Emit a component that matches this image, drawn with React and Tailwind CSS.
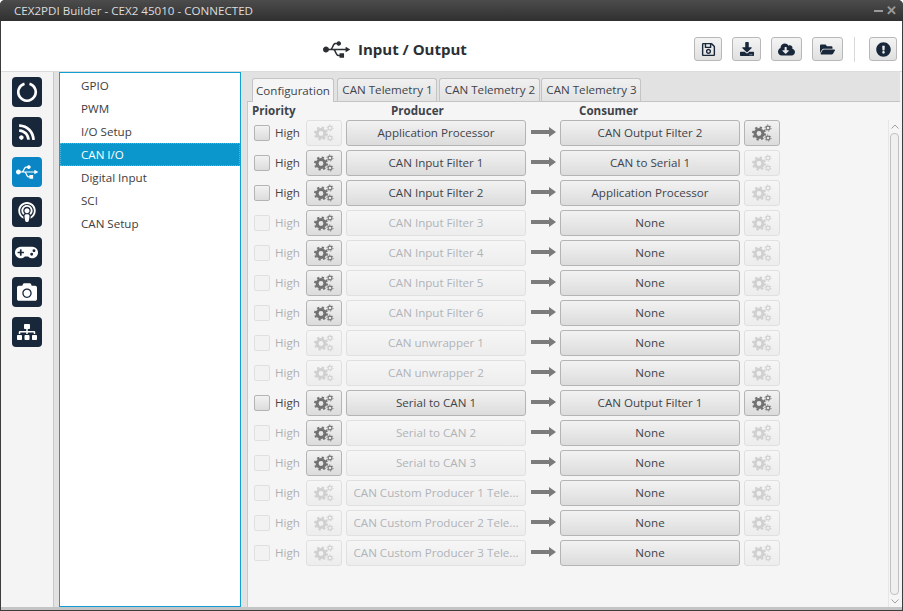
import React from "react";
import { FaUsb, FaRss, FaPodcast, FaGamepad, FaCamera, FaSitemap, FaRegSave, FaDownload, FaCloudDownloadAlt, FaFolderOpen, FaExclamationCircle } from "react-icons/fa";

const rows = [
  ["Application Processor", 1, 0, 1, "CAN Output Filter 2", 1],
  ["CAN Input Filter 1", 1, 1, 1, "CAN to Serial 1", 0],
  ["CAN Input Filter 2", 1, 1, 1, "Application Processor", 0],
  ["CAN Input Filter 3", 0, 1, 0, "None", 0],
  ["CAN Input Filter 4", 0, 1, 0, "None", 0],
  ["CAN Input Filter 5", 0, 1, 0, "None", 0],
  ["CAN Input Filter 6", 0, 1, 0, "None", 0],
  ["CAN unwrapper 1", 0, 0, 0, "None", 0],
  ["CAN unwrapper 2", 0, 0, 0, "None", 0],
  ["Serial to CAN 1", 1, 1, 1, "CAN Output Filter 1", 1],
  ["Serial to CAN 2", 0, 1, 0, "None", 0],
  ["Serial to CAN 3", 0, 1, 0, "None", 0],
  ["CAN Custom Producer 1 Tele...", 0, 0, 0, "None", 0],
  ["CAN Custom Producer 2 Tele...", 0, 0, 0, "None", 0],
  ["CAN Custom Producer 3 Tele...", 0, 0, 0, "None", 0],
];

const Power = () => (
  <svg width="20" height="20" viewBox="0 0 20 20" fill="none">
    <path d="M7.5 1.67 A8.7 8.7 0 1 0 12.5 1.67" stroke="white" strokeWidth="2.6" />
  </svg>
);

const Arrow = () => (
  <svg width="25" height="12" viewBox="0 0 25 12">
    <path d="M0 4H18V1L25 6L18 11V8H0Z" fill="#7b7b7b" />
  </svg>
);

const Cogs = ({ color }) => (
  <svg width="20" height="18" viewBox="0 0 20 18" fill="none" stroke={color}>
    <circle cx="7" cy="9.5" r="3.9" strokeWidth="3" />
    <circle cx="7" cy="9.5" r="6" strokeWidth="2" strokeDasharray="2.3 2.41" />
    <circle cx="16" cy="4" r="1.9" strokeWidth="1.1" />
    <circle cx="16" cy="4" r="3" strokeWidth="1" strokeDasharray="1.35 1.79" />
    <circle cx="16" cy="14" r="1.9" strokeWidth="1.1" />
    <circle cx="16" cy="14" r="3" strokeWidth="1" strokeDasharray="1.35 1.79" />
  </svg>
);

function Gear({ on }) {
  return (
    <div className={on
      ? "w-[36px] h-[26px] shrink-0 flex items-center justify-center rounded-[3px] border border-[#b4b4b4] bg-gradient-to-b from-[#f2f2f2] to-[#dcdcdc]"
      : "w-[36px] h-[26px] shrink-0 flex items-center justify-center rounded-[3px] border border-[#e0e0e0] bg-gradient-to-b from-[#f6f6f6] to-[#ededed]"}>
      <Cogs color={on ? "#727272" : "#d0d0d0"} />
    </div>
  );
}

function Btn({ on, label }) {
  return (
    <div className={on
      ? "w-[180px] h-[26px] shrink-0 flex items-center justify-center rounded-[3px] border border-[#b4b4b4] bg-gradient-to-b from-[#f2f2f2] to-[#dcdcdc] text-[#3f444a]"
      : "w-[180px] h-[26px] shrink-0 flex items-center justify-center rounded-[3px] border border-[#e0e0e0] bg-gradient-to-b from-[#f6f6f6] to-[#ededed] text-[#b0b4b8]"}>
      {label}
    </div>
  );
}

function Row({ r }) {
  const [prod, check, gear1, prodOn, cons, gear2] = r;
  return (
    <div className="flex items-center h-[26px] mb-[4px] pl-[6px]">
      <div className={check
        ? "w-[16px] h-[16px] rounded-[2px] border border-[#b4b4b4] bg-gradient-to-b from-[#f2f2f2] to-[#dcdcdc]"
        : "w-[16px] h-[16px] rounded-[2px] border border-[#e0e0e0] bg-[#f2f2f2]"} />
      <span className={check ? "ml-[5px] w-[31px] text-[#4d4440]" : "ml-[5px] w-[31px] text-[#b0b0b0]"}>High</span>
      <Gear on={gear1} />
      <div className="w-[4px]" />
      <Btn on={prodOn} label={prod} />
      <div className="w-[34px] flex justify-center shrink-0 mb-[2px]"><Arrow /></div>
      <Btn on={1} label={cons} />
      <div className="w-[4px]" />
      <Gear on={gear2} />
    </div>
  );
}

function Tab({ label, active, w, gap }) {
  return (
    <div className={active
      ? "h-[24px] -mb-px flex items-center justify-center rounded-t-[3px] border border-b-0 border-[#c4c4c4] bg-[#f5f5f5] text-[#3f444a]"
      : "h-[23px] pl-[1px] flex items-center justify-center rounded-t-[3px] border border-b-0 border-[#c4c4c4] bg-gradient-to-b from-[#f0f0f0] to-[#e2e2e2] text-[#3f444a]"}
      style={{ width: w, marginRight: gap }}>
      {label}
    </div>
  );
}

function Side({ children, active }) {
  return (
    <div className={active
      ? "w-[30px] h-[30px] rounded-[4px] flex items-center justify-center bg-[#0a86c6] text-white text-[20px]"
      : "w-[30px] h-[30px] rounded-[4px] flex items-center justify-center bg-[#18273a] text-white text-[20px]"}>
      {children}
    </div>
  );
}

function Tool({ w, children }) {
  return (
    <div className="h-[24px] flex items-center justify-center rounded-[3px] border border-[#b8b8b8] bg-gradient-to-b from-[#f4f4f4] to-[#e0e0e0] text-[#18273a] text-[14px]" style={{ width: w }}>
      {children}
    </div>
  );
}

export default function App() {
  const items = ["GPIO", "PWM", "I/O Setup", "CAN I/O", "Digital Input", "SCI", "CAN Setup"];
  return (
    <div className="w-[903px] h-[611px] flex flex-col overflow-hidden bg-[#3c3c3c] text-[11.6px] rounded-t-[5px]" style={{ fontFamily: '"Open Sans", sans-serif' }}>
      <div className="h-[21px] shrink-0 flex items-center justify-between pl-[14px] pr-[6px] bg-gradient-to-b from-[#4c4c4c] to-[#303030] text-[#dcdcdc]">
        <span>CEX2PDI Builder - CEX2 45010 - CONNECTED</span>
        <div className="flex items-center gap-[3px] text-[#9a9a9a] font-bold text-[13px] leading-none">
          <div className="w-[9px] h-[2px] bg-[#9a9a9a]" />
          <span>✕</span>
        </div>
      </div>
      <div className="flex-1 flex flex-col mx-[1px] mb-[1px] bg-[#f4f4f4] min-h-0">
        <div className="h-[50px] shrink-0 relative flex items-center bg-white">
          <div className="absolute left-[322px] top-[15px] flex items-center text-[#2b2f33]">
            <FaUsb className="text-[27px]" />
            <span className="ml-[8px] text-[15px] font-bold">Input / Output</span>
          </div>
          <div className="ml-auto mr-[5px] mt-[6px] flex items-center">
            <Tool w={28}><FaRegSave className="text-[15px]" /></Tool>
            <div className="w-[10px]" />
            <Tool w={29}><FaDownload /></Tool>
            <div className="w-[10px]" />
            <Tool w={31}><FaCloudDownloadAlt className="text-[17px]" /></Tool>
            <div className="w-[10px]" />
            <Tool w={31}><FaFolderOpen className="text-[15px]" /></Tool>
            <div className="w-[11px]" />
            <div className="w-[1px] h-[25px] bg-[#d8d8d8]" />
            <div className="w-[14px]" />
            <Tool w={28}><FaExclamationCircle className="text-[15px]" /></Tool>
          </div>
        </div>
        <div className="flex-1 flex min-h-0 border-t-[1px] border-b-[3px] border-t-[#dcdcdc] border-b-[#c4c4c4]">
          <div className="w-[52px] shrink-0 flex flex-col items-center gap-[10px] pt-[5px] pr-[1px]">
            <Side><Power /></Side>
            <Side><FaRss className="text-[18px]" /></Side>
            <Side active><FaUsb className="text-[22px]" /></Side>
            <Side><FaPodcast /></Side>
            <Side><FaGamepad className="text-[23px]" /></Side>
            <Side><FaCamera /></Side>
            <Side><FaSitemap /></Side>
          </div>
          <div className="w-[6px] shrink-0 bg-[#e2e2e2] border-l border-[#c8c8c8]" />
          <div className="w-[182px] shrink-0 bg-white border border-[#12a0d4] pt-[1px]">
            {items.map((t) => (
              <div key={t} className={t === "CAN I/O"
                ? "h-[23px] flex items-center pl-[20px] bg-[#0b97cb] text-white border border-dotted border-[#58b4da]"
                : "h-[23px] flex items-center pl-[21px] text-[#3d3d3d]"}>
                {t}
              </div>
            ))}
          </div>
          <div className="w-[6px] shrink-0 bg-[#e2e2e2]" />
          <div className="flex-1 flex flex-col min-w-0 pr-[2px]">
            <div className="h-[30px] shrink-0 flex items-end pl-[5px] bg-[#e2e2e2] border-b border-[#c4c4c4]">
              <Tab active label="Configuration" w={82} gap={3} />
              <Tab label="CAN Telemetry 1" w={100} gap={2} />
              <Tab label="CAN Telemetry 2" w={101} gap={1} />
              <Tab label="CAN Telemetry 3" w={100} gap={0} />
            </div>
            <div className="flex-1 relative bg-[#f5f5f5] border-l border-[#c8c8c8] min-h-0">
              <div className="relative h-[18px] font-bold text-[#3f444a] leading-[18px]">
                <span className="absolute left-[4px]">Priority</span>
                <span className="absolute left-[143px]">Producer</span>
                <span className="absolute left-[331px]">Consumer</span>
              </div>
              {rows.map((r) => <Row key={r[0]} r={r} />)}
              <div className="absolute right-0 top-[18px] bottom-0 w-[12px] flex flex-col items-start pl-[1px] border-l border-[#e6e6e6]">
                <div className="h-[13px] w-[9px] flex items-center justify-center">
                  <svg width="8" height="5" viewBox="0 0 8 5" fill="none" stroke="#a0a0a0"><path d="M0.5 4.5L4 1L7.5 4.5" /></svg>
                </div>
                <div className="flex-1 w-[9px] rounded-[4px] border border-[#c0c0c0] bg-[#f0f0f0]" />
                <div className="h-[12px] w-[9px] flex items-center justify-center">
                  <svg width="8" height="5" viewBox="0 0 8 5" fill="none" stroke="#a0a0a0"><path d="M0.5 0.5L4 4L7.5 0.5" /></svg>
                </div>
              </div>
            </div>
          </div>
        </div>
      </div>
    </div>
  );
}
